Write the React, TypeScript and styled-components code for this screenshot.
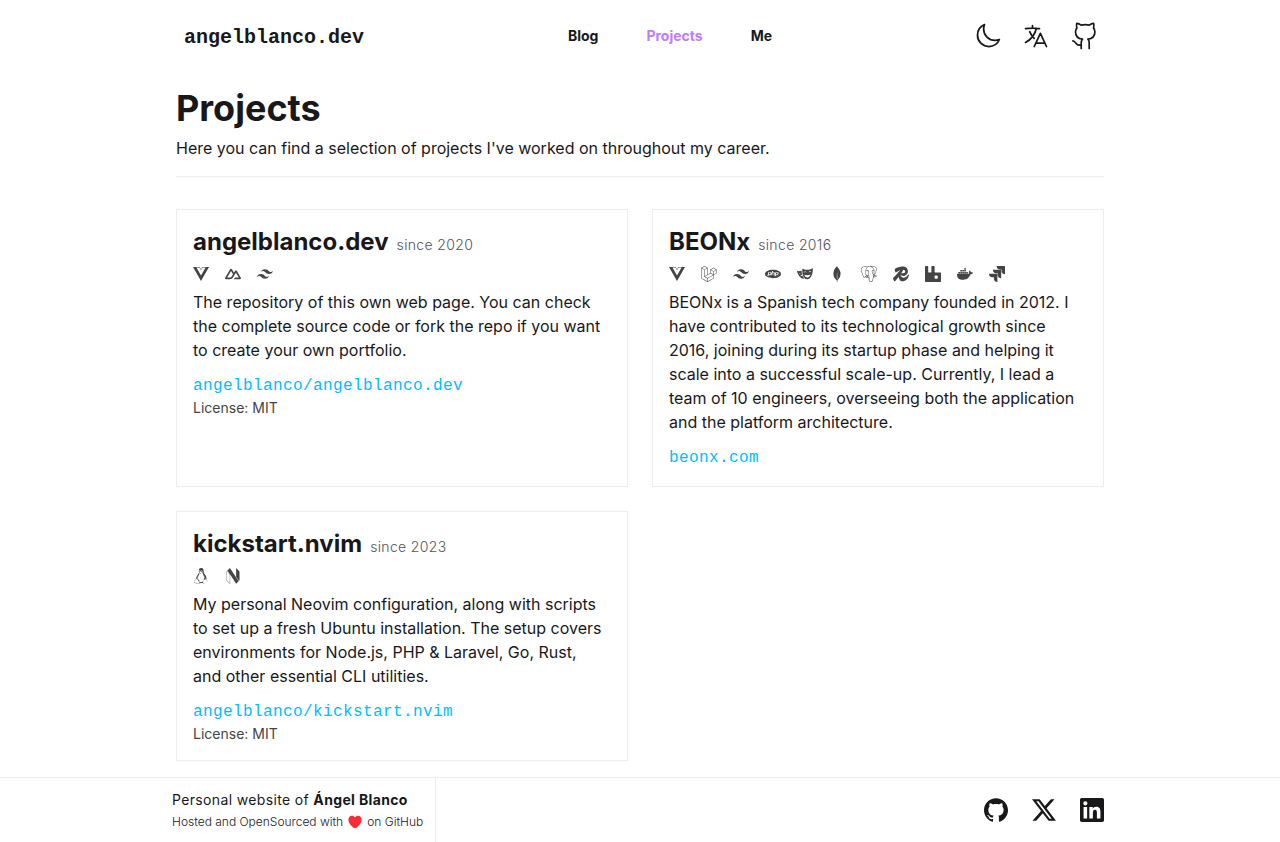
import React from "react";
import styled, { createGlobalStyle } from "styled-components";
import type { IconType } from "react-icons";
import {
  SiVuedotjs,
  SiNuxtdotjs,
  SiTailwindcss,
  SiLaravel,
  SiPhp,
  SiMongodb,
  SiPostgresql,
  SiRedis,
  SiRabbitmq,
  SiDocker,
  SiJira,
  SiLinux,
  SiNeovim,
  SiGithub,
  SiX,
  SiLinkedin,
} from "react-icons/si";
import { HiOutlineMoon, HiOutlineLanguage } from "react-icons/hi2";

const ink = "#18181b";
const line = "#ececee";

const GlobalStyle = createGlobalStyle`
  *, *::before, *::after { box-sizing: border-box; }
  body {
    margin: 0;
    background: #fff;
    color: ${ink};
    font: 400 16px/24px Inter, sans-serif;
  }
  h1, h2, p, ul { margin: 0; padding: 0; }
  ul { list-style: none; }
  a { color: inherit; text-decoration: none; }
  svg { display: block; flex: none; }
`;

const Page = styled.div`
  display: flex;
  flex-direction: column;
  min-height: 100vh;
`;

const Container = styled.div`
  width: 100%;
  max-width: 960px;
  margin: 0 auto;
  padding: 0 16px;
`;

const Header = styled(Container).attrs({ as: "header" })`
  display: flex;
  align-items: center;
  justify-content: space-between;
  height: 72px;
`;

const Logo = styled.a`
  padding: 4px 8px 0;
  font: 700 20px/28px "Liberation Mono", monospace;
`;

const Nav = styled.nav`
  display: flex;
  gap: 48px;
  font-size: 14px;
  font-weight: 700;
  line-height: 20px;
`;

const NavLink = styled.a<{ $active?: boolean }>`
  color: ${(p) => (p.$active ? "#c27aff" : ink)};
`;

const Actions = styled.div`
  display: flex;
  gap: 8px;
`;

const IconButton = styled.button`
  display: flex;
  padding: 6px;
  border: 0;
  background: none;
  color: ${ink};
  cursor: pointer;

  svg {
    width: 28px;
    height: 28px;
  }
`;

const Main = styled(Container).attrs({ as: "main" })`
  flex: 1;
  padding-top: 16px;
  padding-bottom: 16px;
`;

const PageHead = styled.div`
  display: flex;
  flex-direction: column;
  gap: 8px;
  padding-bottom: 16px;
  margin-bottom: 32px;
  border-bottom: 1px solid ${line};
`;

const Title = styled.h1`
  font-size: 36px;
  font-weight: 700;
  line-height: 40px;
`;

const Grid = styled.div`
  display: grid;
  grid-template-columns: repeat(2, minmax(0, 1fr));
  gap: 24px;
`;

const Card = styled.article`
  padding: 16px;
  border: 1px solid ${line};
`;

const CardHead = styled.div`
  display: flex;
  align-items: baseline;
  gap: 8px;
`;

const CardTitle = styled.h2`
  font-size: 24px;
  font-weight: 700;
  line-height: 32px;
`;

const Since = styled.span`
  color: #52525b;
  font-size: 14px;
  font-weight: 300;
  line-height: 20px;
  letter-spacing: 0.025em;
`;

const TechList = styled.ul`
  display: flex;
  gap: 16px;
  margin: 8px 0;
  color: #444;
  font-size: 16px;
`;

const TechItem = styled.li`
  line-height: 16px;
`;

const ProjectLink = styled.a`
  display: block;
  margin-top: 12px;
  color: #00bcff;
  font: 400 16px/24px "Liberation Mono", monospace;
  letter-spacing: 0.025em;
`;

const License = styled.p`
  color: #444;
  font-size: 14px;
  line-height: 20px;
`;

const Footer = styled.footer`
  border-top: 1px solid ${line};
`;

const FooterInner = styled(Container)`
  display: flex;
  align-items: stretch;
  justify-content: space-between;
  padding-left: 0;
`;

const Credits = styled.div`
  padding: 12px 12px 8px;
  border-right: 1px solid ${line};
`;

const Owner = styled.p`
  font-size: 14px;
  line-height: 20px;
  letter-spacing: 0.025em;

  strong {
    font-weight: 700;
  }
`;

const Hosted = styled.p`
  display: flex;
  align-items: center;
  gap: 4px;
  font-size: 12px;
  font-weight: 300;
  line-height: 24px;
`;

const Social = styled.div`
  display: flex;
  align-items: center;
  gap: 24px;

  svg {
    width: 24px;
    height: 24px;
  }
`;

const GithubOutline = () => (
  <svg viewBox="0 0 28 28" fill="none" stroke="currentColor" strokeWidth="1.7" strokeLinecap="round" strokeLinejoin="round" aria-hidden="true">
    <path d="M11.2 26.5v-6c0-1 .4-2.300 1.300-3.300-3.700-.5-7-2.400-7-7.200 0-1.700.5-3 1.400-4.100-.5-1.500-.6-3.100-.1-4.500 1.700.2 3 .8 4.300 1.700 2.600-.6 5.600-.6 8.200 0 1.300-.9 2.600-1.500 4.300-1.700.5 1.400.4 3-.1 4.500.9 1.100 1.400 2.400 1.400 4.100 0 4.800-3.300 6.700-7 7.200.9 1 1.300 2.300 1.300 3.300v6" />
    <path d="M2.900 18.800c2 .4 2.500 1.600 3.200 2.700.9 1.500 2.900 1.900 5.100 1.500" />
  </svg>
);

const Heart = () => (
  <svg width="16" height="16" viewBox="0 0 16 16" fill="#fb2c36" aria-hidden="true">
    <path d="M8 3.400C9 1.900 10.400 1.500 11.600 1.800c2 .5 3.200 2.200 3 4.400-.2 3-2.800 5.900-5.200 7.500-.9.6-1.900.6-2.800 0C4.200 12.100 1.600 9.200 1.400 6.200c-.2-2.200 1-3.900 3-4.400C5.600 1.500 7 1.900 8 3.400Z" />
  </svg>
);

/* Sad mask on the left, tucked behind the larger smiling one. */
const PlaywrightMasks = () => (
  <svg width="1em" height="1em" viewBox="0 0 24 24" fill="currentColor" aria-hidden="true">
    <path
      fillRule="evenodd"
      d="M9.200 4.300c1.300 1 3.400 1.600 6.200 1.500 2.900-.1 5.300-.9 7-2.100.7-.4 1.500 0 1.400.8-.1 3.200-.5 6.600-1.800 9.700-1.500 3.600-4 5.800-6.800 5.700-3.500-.2-5.800-3.600-6.700-7.700C7.900 9.500 7.900 7.300 8 5c0-.8.600-1.100 1.200-.7Zm1.200 5.800c1.100-1.400 2.700-1.500 3.900-.2-.5-2.100-3.700-2.200-3.900.2Zm7.100-.5c1.100-1.300 2.700-1.300 3.900 0-.4-2.200-3.600-2.200-3.900 0Zm-6.700 3.700c1 2.600 2.700 3.900 4.900 3.800 2.200-.1 3.800-1.600 4.600-4.300-2.900 1.300-6.200 1.500-9.500.5Z"
    />
    <path
      fillRule="evenodd"
      d="M.9 7.500c2 .4 4 .2 5.900-.6.1 2.200.4 4.200 1 6.100-1.400.2-2.400 1-2.900 2.500 1.200-.8 2.300-1.100 3.500-1 .7 1.600 1.600 3 2.800 4.100-3.500 1-6.300-1.300-8.200-4.100C1.400 12.300.5 10.200.1 8.200 0 7.600.3 7.400.9 7.500Zm1.500 3.700c1.300 1.200 2.900.9 3.500-.8-1.200.7-2.300 1-3.500.8Z"
    />
  </svg>
);

type Tech = [name: string, icon: IconType | (() => React.JSX.Element)];

interface Project {
  name: string;
  since: number;
  tech: Tech[];
  text: string;
  link: string;
  href: string;
  license?: string;
}

const projects: Project[] = [
  {
    name: "angelblanco.dev",
    since: 2020,
    tech: [["Vue", SiVuedotjs], ["Nuxt", SiNuxtdotjs], ["Tailwind CSS", SiTailwindcss]],
    text: "The repository of this own web page. You can check the complete source code or fork the repo if you want to create your own portfolio.",
    link: "angelblanco/angelblanco.dev",
    href: "#angelblanco.dev",
    license: "MIT",
  },
  {
    name: "BEONx",
    since: 2016,
    tech: [
      ["Vue", SiVuedotjs],
      ["Laravel", SiLaravel],
      ["Tailwind CSS", SiTailwindcss],
      ["PHP", SiPhp],
      ["Playwright", PlaywrightMasks],
      ["MongoDB", SiMongodb],
      ["PostgreSQL", SiPostgresql],
      ["Redis", SiRedis],
      ["RabbitMQ", SiRabbitmq],
      ["Docker", SiDocker],
      ["Jira", SiJira],
    ],
    text: "BEONx is a Spanish tech company founded in 2012. I have contributed to its technological growth since 2016, joining during its startup phase and helping it scale into a successful scale-up. Currently, I lead a team of 10 engineers, overseeing both the application and the platform architecture.",
    link: "beonx.com",
    href: "#beonx",
  },
  {
    name: "kickstart.nvim",
    since: 2023,
    tech: [["Linux", SiLinux], ["Neovim", SiNeovim]],
    text: "My personal Neovim configuration, along with scripts to set up a fresh Ubuntu installation. The setup covers environments for Node.js, PHP & Laravel, Go, Rust, and\u00a0other essential CLI utilities.",
    link: "angelblanco/kickstart.nvim",
    href: "#kickstart.nvim",
    license: "MIT",
  },
];

const ProjectCard = ({ project }: { project: Project }) => (
  <Card>
    <CardHead>
      <CardTitle>{project.name}</CardTitle>
      <Since>since {project.since}</Since>
    </CardHead>
    <TechList>
      {project.tech.map(([name, Icon]) => (
        <TechItem key={name} aria-label={name}>
          <Icon />
        </TechItem>
      ))}
    </TechList>
    <p>{project.text}</p>
    <ProjectLink href={project.href}>{project.link}</ProjectLink>
    {project.license && <License>License: {project.license}</License>}
  </Card>
);

export default function App() {
  return (
    <Page>
      <GlobalStyle />
      <Header>
        <Logo href="#home">angelblanco.dev</Logo>
        <Nav>
          <NavLink href="#blog">Blog</NavLink>
          <NavLink href="#projects" $active aria-current="page">Projects</NavLink>
          <NavLink href="#me">Me</NavLink>
        </Nav>
        <Actions>
          <IconButton type="button" aria-label="Toggle dark mode"><HiOutlineMoon /></IconButton>
          <IconButton type="button" aria-label="Change language"><HiOutlineLanguage /></IconButton>
          <IconButton type="button" aria-label="Source on GitHub"><GithubOutline /></IconButton>
        </Actions>
      </Header>
      <Main>
        <PageHead>
          <Title>Projects</Title>
          <p>Here you can find a selection of projects I've worked on throughout my career.</p>
        </PageHead>
        <Grid>
          {projects.map((project) => (
            <ProjectCard key={project.name} project={project} />
          ))}
        </Grid>
      </Main>
      <Footer>
        <FooterInner>
          <Credits>
            <Owner>Personal website of <strong>Ángel Blanco</strong></Owner>
            <Hosted>Hosted and OpenSourced with <Heart /> on GitHub</Hosted>
          </Credits>
          <Social>
            <a href="#github" aria-label="GitHub"><SiGithub /></a>
            <a href="#x" aria-label="X"><SiX /></a>
            <a href="#linkedin" aria-label="LinkedIn"><SiLinkedin /></a>
          </Social>
        </FooterInner>
      </Footer>
    </Page>
  );
}
